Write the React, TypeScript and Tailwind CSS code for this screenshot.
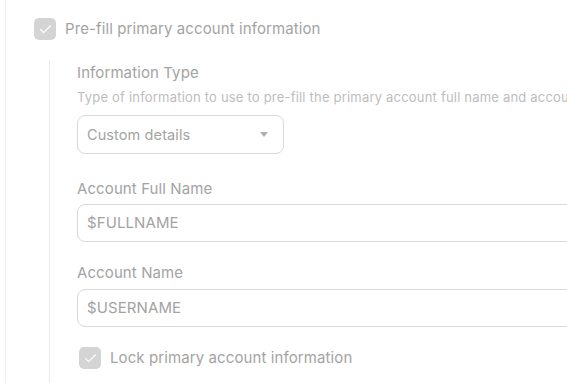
import { Check } from 'lucide-react';

function Box() {
  return (
    <span className="flex h-[22px] w-[22px] shrink-0 items-center justify-center rounded-[5px] bg-[#d4d4d4]">
      <Check className="h-[15px] w-[15px] text-white" strokeWidth={1.75} />
    </span>
  );
}

export default function App() {
  return (
    <div className="h-[383px] w-[567px] overflow-hidden bg-white font-['Inter',sans-serif] tracking-[0.1px] text-[#a3a3a3]">
      <div className="ml-[5px] h-full border-l border-[#ececec] pl-[28px] pt-[18px]">
        <label className="flex items-center gap-[9px]">
          <Box />
          <span className="text-[15px] leading-[22px]">Pre-fill primary account information</span>
        </label>

        <div className="ml-[15px] mt-[20px] h-full border-l border-[#ececec] pl-[27px] pt-[3px]">
          <div className="text-[15px] leading-[20px]">Information Type</div>
          <div className="mt-[6px] whitespace-nowrap text-[13px] leading-[16px] tracking-[0.2px] text-[#bdbdbd]">
            Type of information to use to pre-fill the primary account full name and account name
          </div>
          <div className="mt-[10px] flex h-[39px] w-[207px] items-center justify-between rounded-[8px] border border-[#d9d9d9] pl-[9px] pr-[15px] text-[14.5px]">
            <span>Custom details</span>
            <svg width="8" height="5" viewBox="0 0 8 5" className="text-[#b0b0b0]">
              <path d="M0 0h8L4 5z" fill="currentColor" />
            </svg>
          </div>

          <div className="mt-[25px] text-[15px] leading-[20px]">Account Full Name</div>
          <div className="mt-[5px] flex h-[38px] w-[520px] items-center rounded-[8px] border border-[#d9d9d9] pl-[9px] text-[15px]">
            $FULLNAME
          </div>

          <div className="mt-[21px] text-[15px] leading-[20px]">Account Name</div>
          <div className="mt-[6px] flex h-[38px] w-[520px] items-center rounded-[8px] border border-[#d9d9d9] pl-[9px] text-[15px]">
            $USERNAME
          </div>

          <label className="mt-[20px] flex items-center gap-[9px] pl-[2px]">
            <Box />
            <span className="text-[15px] leading-[22px]">Lock primary account information</span>
          </label>
        </div>
      </div>
    </div>
  );
}
